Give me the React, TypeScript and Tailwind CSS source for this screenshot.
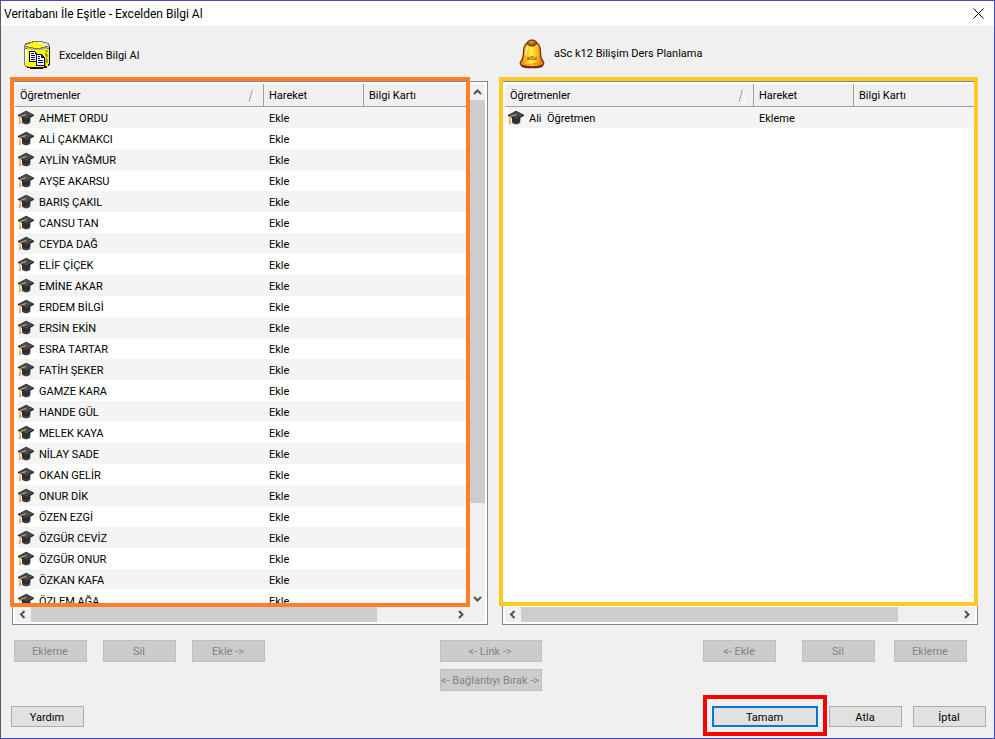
import { ReactNode } from "react";
import clsx from "clsx";

type Row = { name: string; action: string };

const excelTeachers = [
  "AHMET ORDU",
  "ALİ ÇAKMAKCI",
  "AYLİN YAĞMUR",
  "AYŞE AKARSU",
  "BARIŞ ÇAKIL",
  "CANSU TAN",
  "CEYDA DAĞ",
  "ELİF ÇİÇEK",
  "EMİNE AKAR",
  "ERDEM BİLGİ",
  "ERSİN EKİN",
  "ESRA TARTAR",
  "FATİH ŞEKER",
  "GAMZE KARA",
  "HANDE GÜL",
  "MELEK KAYA",
  "NİLAY SADE",
  "OKAN GELİR",
  "ONUR DİK",
  "ÖZEN EZGİ",
  "ÖZGÜR CEVİZ",
  "ÖZGÜR ONUR",
  "ÖZKAN KAFA",
  "ÖZLEM AĞA",
];

const excelRows: Row[] = excelTeachers.map((name) => ({ name, action: "Ekle" }));
const ascRows: Row[] = [{ name: "Ali  Öğretmen", action: "Ekleme" }];

const CapIcon = () => (
  <svg width="16" height="16" viewBox="0 0 16 16" className="shrink-0" aria-hidden="true">
    <path d="M4 7v5.200c1 1.500 2.400 2 4.200 2s3.200-.5 4-2V7z" fill="#3b3f47" />
    <path d="M4 8.300l4.300 2.600 4-2.400v1.800l-4 2.300L4 10.200z" fill="#23262b" />
    <path d="M0 5L8.200.7 16 4.800v1L8.400 10 0 6z" fill="#24272c" />
    <path d="M.8 4.900L8.200 1.200l7.200 3.600-7.100 3.900z" fill="#454a53" />
    <path d="M8.300 4.600L2 6.600v5" fill="none" stroke="#f2a33a" strokeWidth="1.100" />
    <path d="M1.500 10.500h1.200l.3 3.600H.9z" fill="#f2a33a" />
  </svg>
);

const DatabaseIcon = () => (
  <svg width="26" height="28" viewBox="0 0 26 28" shapeRendering="crispEdges" aria-hidden="true">
    <path d="M0 4h1V2h3V1h4V0h11v1h4v1h2v2h1v20h-1v1h-2v2h-4v1H6v-1H3v-1H1v-2H0z" fill="#77776c" />
    <path d="M25 6h1v18h-1v1h-2v2h-4v1H6v-1H3v-1h16v-1h4v-2h2z" fill="#111" />
    <path d="M1 8h24v15h-1v2h-4v1H5v-1H2v-1H1z" fill="#ffff00" />
    <path d="M1 8h2v14H1z" fill="#fff" />
    <path d="M3 3h3V2h3V1h9v1h4v1h1v2h-2v1h-4v1H9V6H4V5H2V4h1z" fill="#ffff00" />
    <path d="M1 4h1v2h2v1h5v1h9V7h4V6h2V4h1v3h-2v1h-3v1H7V8H3V7H1z" fill="#b4b4a4" />
    <path d="M15 1h4v1h4v1h1v2h-2V4h-4V3h-3z" fill="#e8e8d8" />
    <path d="M21 9h3v2h-1v2h1v3h-1v2h1v4h-2v2h-2v-2h1v-4h1v-3h-1v-3h1v-2h-1z" fill="#a8a800" />
    <path d="M5 10h6v1h1v1h1v9H5z" fill="#000" />
    <path d="M6 11h5v2h1v7H6z" fill="#fff" />
    <path d="M7 12h3v1H7zM7 14h4v1H7zM7 16h4v1H7zM7 18h4v1H7z" fill="#00007b" />
    <path d="M12 13h6v1h1v1h1v1h1v9h-9z" fill="#00006b" />
    <path d="M13 14h4v3h3v7h-7z" fill="#fff" />
    <path d="M14 15h2v1h-2zM14 17h2v1h-2zM14 19h5v1h-5zM14 21h5v1h-5z" fill="#00007b" />
  </svg>
);

const BellIcon = () => (
  <svg width="26" height="30" viewBox="0 0 26 30" aria-hidden="true">
    <defs>
      <linearGradient id="bell" x1="0" x2="1">
        <stop offset="0" stopColor="#d87a08" />
        <stop offset=".25" stopColor="#ffb61c" />
        <stop offset=".45" stopColor="#fff04a" />
        <stop offset=".75" stopColor="#ffb416" />
        <stop offset="1" stopColor="#a84a08" />
      </linearGradient>
    </defs>
    <ellipse cx="13" cy="27" rx="11" ry="2.300" fill="#6b2a12" />
    <path
      d="M13 2.500c-6 0-8.500 4.500-8.500 10 0 5-.6 7.500-2.600 9.800-1.400 2-.6 3.700 1.600 4.300 6 1.500 13 1.500 19 0 2.200-.6 3-2.300 1.600-4.300-2-2.300-2.600-4.800-2.600-9.800 0-5.500-2.500-10-8.500-10z"
      fill="url(#bell)"
      stroke="#6a2d0c"
      strokeWidth="1.200"
    />
    <path d="M2.800 22.600c5 2.200 15.400 2.200 20.400 0 .8 1.400.4 2.400-1 2.800-5.500 1.300-13 1.300-18.400 0-1.400-.4-1.800-1.400-1-2.800z" fill="#ff8c12" />
    <path d="M5 23.800c3 .9 7 1.200 9.500 1.100" fill="none" stroke="#ffd84a" strokeWidth="1.200" />
    <ellipse cx="13" cy="4" rx="4.500" ry="3" fill="#a85b0c" stroke="#5f2c0c" />
    <ellipse cx="12.500" cy="3.200" rx="2.500" ry="1.200" fill="#d99022" />
    <path d="M8.500 8c-1.200 2-1.500 5-1.500 8" fill="none" stroke="#fff6a0" strokeWidth="1.600" />
    <text x="13" y="20.500" textAnchor="middle" fontSize="6" fontWeight="bold" fontFamily="Liberation Sans, sans-serif" fill="#9a4a10">
      aSc
    </text>
  </svg>
);

const SortMark = () => (
  <svg width="9" height="14" viewBox="0 0 9 14" aria-hidden="true">
    <path d="M4.500.5L8 13.500H1" fill="none" stroke="#fff" />
    <path d="M1 13L4.500.5" fill="none" stroke="#a0a0a0" />
  </svg>
);

const arrows = {
  up: "M1 6l3.500-3.500L8 6",
  down: "M1 2l3.500 3.500L8 2",
  left: "M5.500 1L2 4.500 5.500 8",
  right: "M2 1l3.500 3.500L2 8",
};

const ArrowButton = ({ dir, label }: { dir: keyof typeof arrows; label: string }) => (
  <button type="button" aria-label={label} className="flex size-4 shrink-0 items-center justify-center">
    <svg width="9" height="9" viewBox="0 0 9 9">
      <path d={arrows[dir]} fill="none" stroke="#505050" strokeWidth="2" />
    </svg>
  </button>
);

type ListProps = {
  rows: Row[];
  vertical?: boolean;
  thumbClass: string;
  frameClass: string;
};

const TeacherList = ({ rows, vertical, thumbClass, frameClass }: ListProps) => (
  <div className="relative flex min-h-0 flex-1 flex-col border border-[#828790] bg-white p-[2px]">
    <div className="flex min-h-0 flex-1">
      <div className="min-w-0 flex-1 overflow-hidden">
        <table className="w-full table-fixed border-separate border-spacing-0 text-left">
          <colgroup>
            <col className="w-[249px]" />
            <col className="w-[100px]" />
            <col />
          </colgroup>
          <thead>
            <tr className="h-[23px] bg-[#f0f0f0] *:border-b *:border-[#a0a0a0] *:p-0 *:pl-[5px] *:pt-[2px] *:font-normal">
              <th className="border-r">
                <div className="flex items-center justify-between pr-[6px]">
                  Öğretmenler
                  <SortMark />
                </div>
              </th>
              <th className="border-r">Hareket</th>
              <th>Bilgi Kartı</th>
            </tr>
          </thead>
          <tbody>
            {rows.map((row) => (
              <tr key={row.name} className="h-[21px] odd:bg-[#f4f4f4] *:p-0">
                <td className="border-l-3 border-white">
                  <div className="flex items-center gap-[5px] whitespace-pre">
                    <CapIcon />
                    <span className="pt-[2px]">{row.name}</span>
                  </div>
                </td>
                <td>
                  <div className="pl-[5px] pt-[2px]">{row.action}</div>
                </td>
                <td />
              </tr>
            ))}
          </tbody>
        </table>
      </div>
      {vertical && (
        <div className="flex w-[15px] flex-col items-center bg-[#f0f0f0]">
          <ArrowButton dir="up" label="Yukarı" />
          <div className="w-full flex-1">
            <div className="h-[82%] w-full bg-[#cdcdcd]" />
          </div>
          <ArrowButton dir="down" label="Aşağı" />
        </div>
      )}
    </div>
    <div className={clsx("flex h-[15px] shrink-0 items-center bg-[#f0f0f0]", vertical && "pr-4")}>
      <ArrowButton dir="left" label="Sola" />
      <div className="h-full flex-1">
        <div className={clsx("h-full bg-[#cdcdcd]", thumbClass)} />
      </div>
      <ArrowButton dir="right" label="Sağa" />
    </div>
    <div className={clsx("pointer-events-none absolute border-4", frameClass)} />
  </div>
);

type ButtonProps = { children: ReactNode; disabled?: boolean; className?: string };

const DialogButton = ({ children, disabled, className = "w-[73px] border border-[#adadad]" }: ButtonProps) => (
  <button
    type="button"
    disabled={disabled}
    className={clsx(
      "flex items-center justify-center whitespace-nowrap pr-px pt-[2px]",
      disabled ? "h-[22px] bg-[#cccccc] text-[#838383]" : "h-[21px] bg-[#e1e1e1]",
      className
    )}
  >
    {children}
  </button>
);

const smallDisabled = "w-[73px] border border-[#bfbfbf]";
const wideDisabled = "w-[102px] border border-[#bfbfbf]";

export default function App() {
  return (
    <div className="flex h-screen flex-col overflow-hidden border border-[#4646c8] border-l-[#5a5862] bg-[#f0f0f0] font-[Roboto,sans-serif] text-[11px] leading-4 text-black">
      {/* Title bar */}
      <header className="flex h-[25px] shrink-0 items-center justify-between bg-white pl-[3px] pr-[10px]">
        <h1 className="text-[12px]">Veritabanı İle Eşitle - Excelden Bilgi Al</h1>
        <button type="button" aria-label="Kapat">
          <svg width="11" height="11" viewBox="0 0 11 11">
            <path d="M.5.5l10 10M10.500.5l-10 10" stroke="#000" fill="none" />
          </svg>
        </button>
      </header>

      {/* Lists */}
      <main className="grid min-h-0 flex-1 grid-cols-2 gap-[14px] pl-[11px] pr-4">
        <section className="flex min-h-0 flex-col">
          <div className="flex h-[55px] shrink-0 items-center gap-[9px] pl-3 pt-[2px]">
            <DatabaseIcon />
            <h2 className="pt-[2px]">Excelden Bilgi Al</h2>
          </div>
          <TeacherList
            rows={excelRows}
            vertical
            thumbClass="w-[82%]"
            frameClass="-left-[3px] right-[17px] -top-[5px] bottom-[17px] border-[#ff7f27]"
          />
        </section>
        <section className="flex min-h-0 flex-col">
          <div className="flex h-[55px] shrink-0 items-center gap-[9px] pl-[17px]">
            <BellIcon />
            <h2>aSc k12 Bilişim Ders Planlama</h2>
          </div>
          <TeacherList
            rows={ascRows}
            thumbClass="w-[86%]"
            frameClass="-left-1 -right-px -top-[5px] bottom-[18px] border-[#ffc923]"
          />
        </section>
      </main>

      {/* Row actions */}
      <div className="grid shrink-0 grid-cols-[1fr_auto_1fr] pl-[13px] pr-[27px] pt-[15px]">
        <div className="flex gap-4">
          <DialogButton disabled className={smallDisabled}>Ekleme</DialogButton>
          <DialogButton disabled className={smallDisabled}>Sil</DialogButton>
          <DialogButton disabled className={smallDisabled}>Ekle -&gt;</DialogButton>
        </div>
        <div className="flex flex-col gap-[7px]">
          <DialogButton disabled className={wideDisabled}>&lt;- Link -&gt;</DialogButton>
          <DialogButton disabled className={wideDisabled}>&lt;- Bağlantıyı Bırak -&gt;</DialogButton>
        </div>
        <div className="flex justify-end gap-[26px]">
          <DialogButton disabled className={smallDisabled}>&lt;- Ekle</DialogButton>
          <div className="flex gap-[19px]">
            <DialogButton disabled className={smallDisabled}>Sil</DialogButton>
            <DialogButton disabled className={smallDisabled}>Ekleme</DialogButton>
          </div>
        </div>
      </div>

      {/* Dialog buttons */}
      <footer className="flex shrink-0 items-center justify-between pb-[11px] pl-[10px] pr-2 pt-[15px]">
        <DialogButton>Yardım</DialogButton>
        <div className="flex gap-[11px]">
          <div className="relative">
            <DialogButton className="w-[106px] border-2 border-[#0078d7]">Tamam</DialogButton>
            <div className="pointer-events-none absolute -inset-x-[9px] -bottom-[9px] -top-[11px] border-4 border-[#ff0000]" />
          </div>
          <DialogButton>Atla</DialogButton>
          <DialogButton>İptal</DialogButton>
        </div>
      </footer>
    </div>
  );
}
